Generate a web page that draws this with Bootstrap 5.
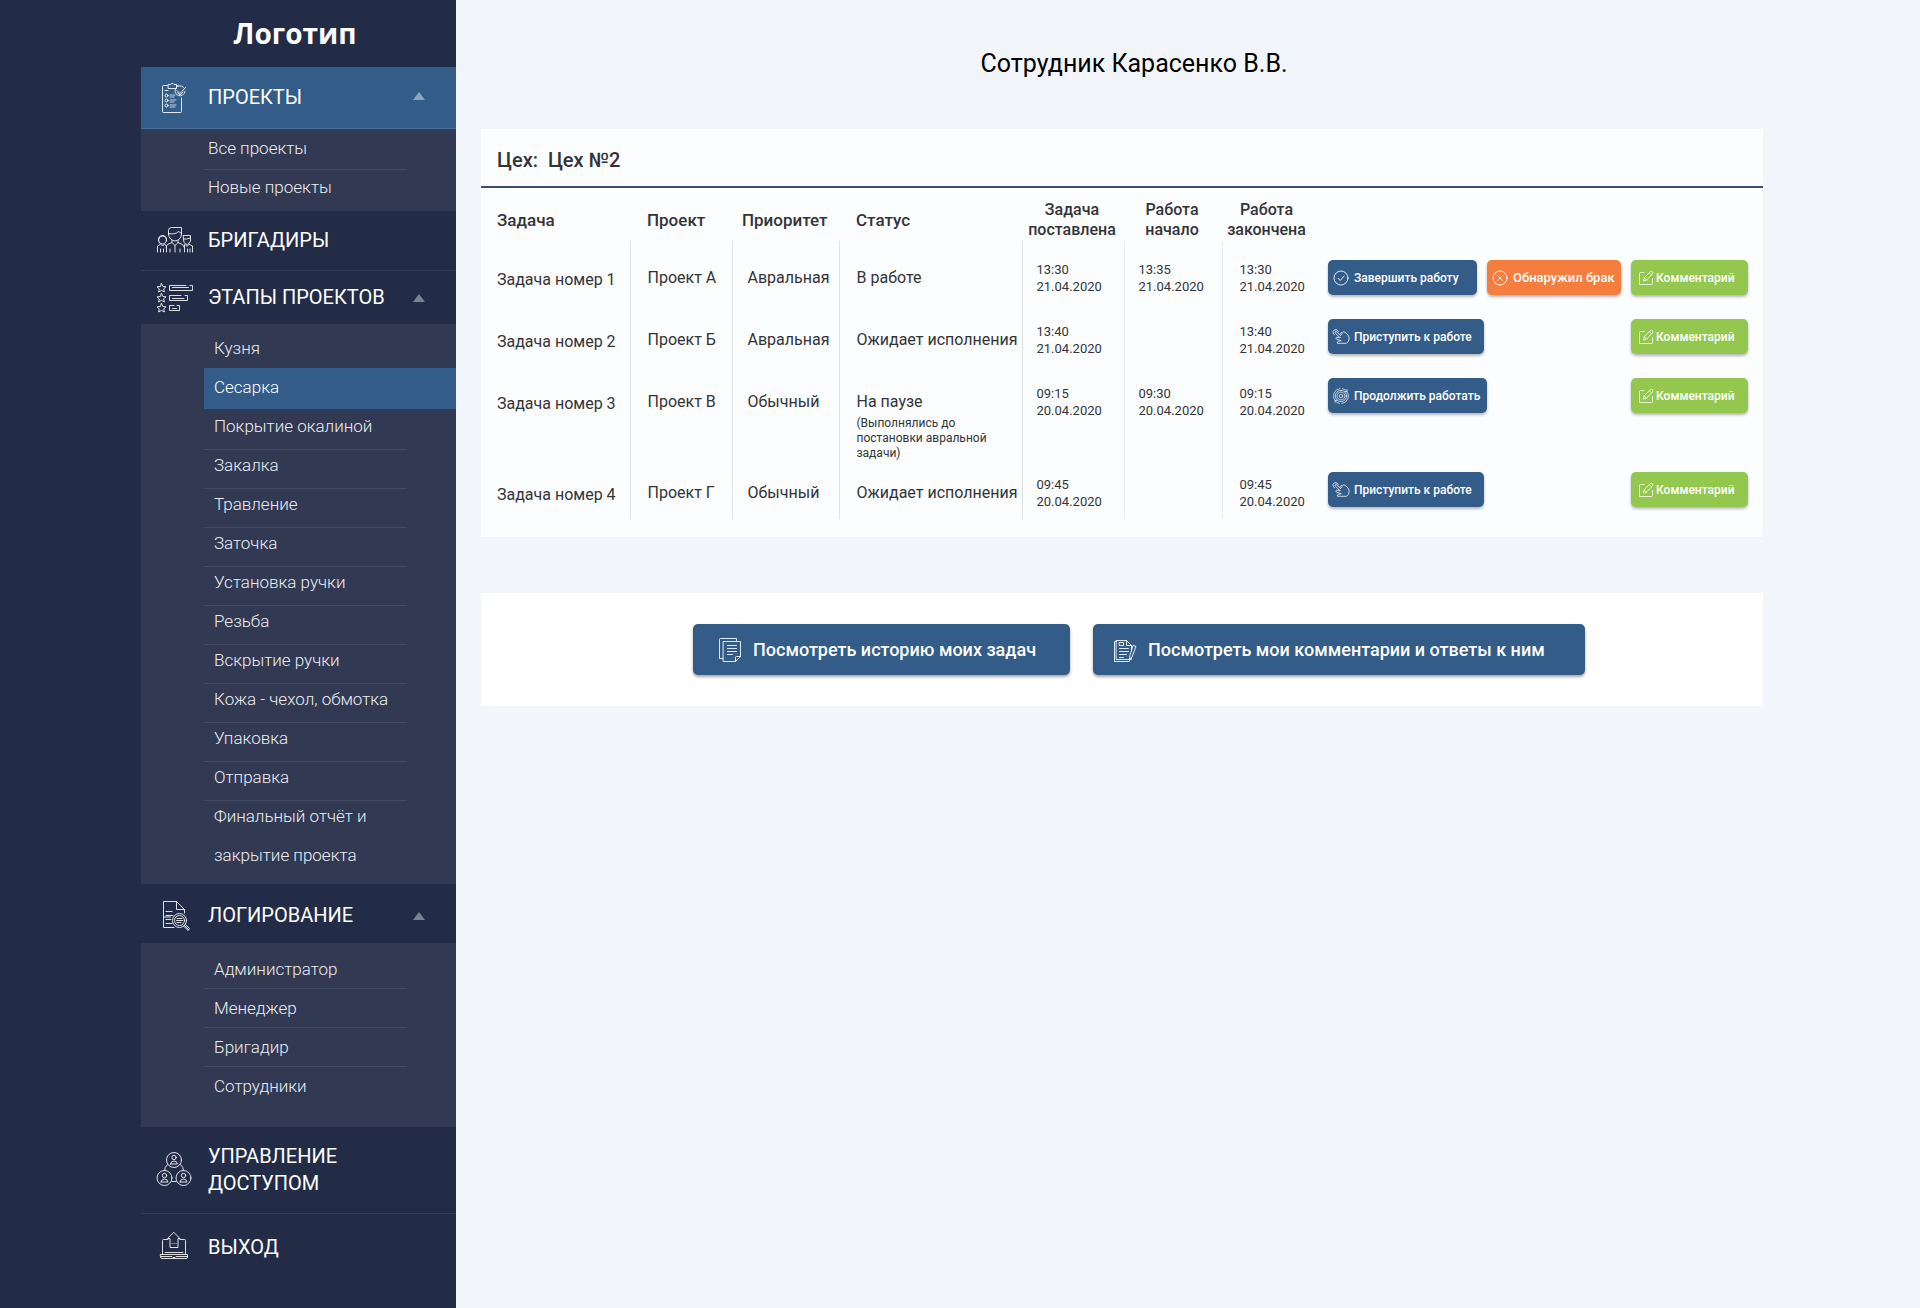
<!DOCTYPE html>
<html lang="ru">
<head>
<meta charset="utf-8">
<meta name="viewport" content="width=device-width, initial-scale=1">
<title>Сотрудник Карасенко В.В.</title>
<link href="https://cdn.jsdelivr.net/npm/bootstrap@5.3.0/dist/css/bootstrap.min.css" rel="stylesheet">
<style>
  body { font-family: Roboto, "Noto Sans", sans-serif; background: #f2f6fb; color: #333437; }
  .side { width: 456px; padding-left: 141px; background: #222c47; }
  .brand { height: 67px; line-height: 67px; font-family: "Open Sans", "Noto Sans", sans-serif; font-size: 28px; font-weight: 700; padding-right: 7px; }
  .sect { height: 60px; padding: 0 31px 0 13px; gap: 14px; border: 0; border-bottom: 1px solid #323d59; background: none; color: #fff; font-size: 20px; line-height: 27px; font-weight: 400; text-align: left; }
  .sect svg.ico { width: 40px; height: 40px; flex: none; }
  .sect.current { height: 62px; background: #335c88; border-color: #44709c; }
  .sect.opened { border-bottom: 0; }
  .stages-head { height: 53px; }
  .log-head { height: 59px; padding-top: 4px; }
  .access { height: 87px; }
  .leave { height: 66px; border-bottom: 0; }
  .tri { width: 0; height: 0; border: 6px solid transparent; border-top: 0; border-bottom: 8px solid #7c8292; }
  .current .tri { border-bottom-color: #8ba4be; margin-bottom: 4px; }
  .sub { background: #323953; padding-left: 63px; }
  .sub li { margin-right: 49px; padding-bottom: 3px; border-bottom: 1px solid #434a64; }
  .sub li:last-child, .sub li.on, .sub li.plain { border-bottom-color: transparent; }
  .sub a { display: block; margin-top: -4px; padding-left: 10px; color: #eceef2; font-size: 17px; line-height: 39px; font-weight: 300; text-decoration: none; white-space: nowrap; }
  .sub li.on { margin-right: 0; padding-bottom: 1px; }
  .sub li.on a { background: #335c88; padding-bottom: 2px; color: #fff; }
  .sub-projects { padding-top: 2px; height: 82px; }
  .sub-projects li { padding-bottom: 1px; }
  .sub-projects a { margin-top: -2px; padding-left: 4px; }
  .sub-stages { padding-top: 9px; height: 560px; }
  .sub-logs { padding-top: 7px; height: 184px; }
  .sub-logs a { margin-top: 0; line-height: 38px; }
  .sub-logs li { padding-bottom: 0; }

  .page { padding: 0 157px 40px 25px; min-width: 0; }
  .page-title { font-size: 25px; line-height: 32px; font-weight: 400; color: #000; padding: 48px 0 49px 24px; margin: 0; }
  .panel { background: #fcfdff; padding-bottom: 18px; }
  .panel-title { font-size: 20px; line-height: 24px; font-weight: 500; padding: 19px 16px 14px; margin: 0; border-bottom: 2px solid #3f4b70; white-space: pre-wrap; }
  .tasks { width: 100%; table-layout: fixed; font-size: 16px; line-height: 24px; }
  .tasks th { height: 53px; padding: 11px 0 0 17px; font-size: 17px; font-weight: 500; line-height: 20px; vertical-align: middle; }
  .tasks th:first-child { padding-left: 16px; }
  .tasks th.when { padding: 10px 2px 0 0; font-size: 16px; text-align: center; }
  .tasks td { height: 62px; padding: 25px 0 0 17px; vertical-align: top; border-right: 1px solid #e0e1e4; white-space: nowrap; }
  .tasks tr.tall td { height: 91px; }
  .tasks tr:last-child td { height: 63px; }
  .tasks td:first-child { padding: 27px 0 0 16px; }
  .tasks td.prio { padding-left: 15px; }
  .tasks th.prio { padding-left: 10px; }
  .tasks td.when { padding: 20px 0 0 14px; font-size: 13px; line-height: 17px; border-color: #eaebee; }
  .tasks td.done, .tasks td.acts { border-right: 0; }
  .tasks td.done { padding-left: 17px; }
  .tasks td.acts { padding: 19px 15px 0; }
  .tasks .lift-1 td.acts { padding-top: 16px; }
  .tasks .lift-2 td.acts { padding-top: 13px; }
  .remark { margin: 2px 0 -8px; font-size: 12px; line-height: 15px; width: 140px; white-space: normal; }
  .act { height: 35px; padding: 0 8px 0 4px; gap: 4px; border: 0; border-radius: 5px; color: #fff; font-size: 12px; line-height: 18px; font-weight: 500; box-shadow: 0 2px 3px rgba(0,0,0,.28); white-space: nowrap; }
  .act svg { width: 18px; height: 18px; flex: none; }
  .act-blue { background: #335c88; }
  .act-red { background: #f57d3d; width: 134px; margin-left: 10px; font-size: 13px; }
  .act-green { background: #93c74e; width: 117px; padding-left: 6px; gap: 1px; }
  .w-finish { width: 149px; }
  .w-start { width: 156px; }
  .w-resume { width: 159px; }
  .links { background: #fff; margin-top: 56px; padding: 31px 4px 31px 38px; gap: 23px; }
  .big { height: 51px; gap: 10px; border: 0; border-radius: 5px; background: #335c88; color: #fff; font-size: 18px; font-weight: 500; box-shadow: 0 2px 3px rgba(0,0,0,.35); }
  .big svg { width: 26px; height: 26px; flex: none; }
  .big-history { width: 377px; padding: 0 0 0 24px; }
  .big-comments { width: 492px; padding: 0 0 0 19px; }
  .ln { fill: none; stroke: currentColor; stroke-linecap: round; stroke-linejoin: round; stroke-opacity: .85; }
</style>
<script src="https://cdn.jsdelivr.net/npm/bootstrap@5.3.0/dist/js/bootstrap.bundle.min.js"></script>
</head>
<body>
<svg class="d-none" aria-hidden="true">
  <symbol id="i-check" viewBox="0 0 18 18"><g class="ln"><circle cx="9" cy="9" r="7"/><path d="M6 9.300l2.200 2.200 4-4.600"/></g></symbol>
  <symbol id="i-cross" viewBox="0 0 18 18"><g class="ln"><circle cx="9" cy="9" r="7"/><path d="M6.500 6.500l5 5M11.500 6.500l-5 5"/></g></symbol>
  <symbol id="i-edit" viewBox="0 0 18 18"><g class="ln" stroke-width=".9"><path d="M7 3.500H3.500Q2.500 3.500 2.500 4.500V15.500H14.500Q15.500 15.500 15.500 14.500V9.500"/><path d="M6.500 11.700L7.300 8.800 13.200 2.600Q14.500 1.700 15.500 2.700 16.400 3.800 15.500 4.900L9.500 11.200zM12.300 3.700l2.100 2.100M7.300 8.800l2.200 2.400"/></g></symbol>
  <symbol id="i-tap" viewBox="0 0 18 18"><g class="ln" stroke-width=".9"><path d="M2.500 6.800A3 3 0 0 1 1 3.500Q1.800 1.500 4 1.700 5.800 1.900 6.300 3.700"/><path d="M8 9.700L3.200 4.900Q2.600 3.800 3.600 3.500 4.200 3.300 4.900 4L8.500 7.300M8.200 5.500Q9 3.800 10.600 4.700 11.500 3 13 4.300 16.800 6.500 17.300 10 17 14 14.500 15.300H5.500Q4.500 13.700 6.500 13.300L9.200 12.700 4.500 11.200Q3 9.900 4.700 9.300L8 9.700M8.500 7.300L10.200 5.800"/></g></symbol>
  <symbol id="i-gear" viewBox="0 0 18 18"><g class="ln" stroke-width=".8"><circle cx="9" cy="9" r="1.700"/><circle cx="9" cy="9" r="3.900" stroke-dasharray="2.300 .7"/><circle cx="9" cy="9" r="5.600"/><path d="M3.300 14A7.600 7.600 0 0 1 8 1.500M10.500 1.600L13.700 3.300M14.800 4.200A7.600 7.600 0 0 1 9.800 16.500M7.500 16.400L4.500 15.200M15 2.500v2h-2M3 15.500v-2h2"/></g></symbol>
  <symbol id="i-papers" viewBox="0 0 26 26"><g class="ln"><path d="M19.500 3.500V1.500H3.500Q2.500 1.500 2.500 2.500V21.500H6"/><path d="M6.500 4.500H23.500V19.500L18.500 24.500H6.500zM23.500 19.500H19.500Q18.500 19.500 18.500 20.500V24.500M10.500 8.500h9M10.500 11.500h9M10.500 14.500h9M10.500 17.500h5" /></g></symbol>
  <symbol id="i-note" viewBox="0 0 26 26"><g class="ln"><path d="M4.500 4.500H2.500V24.500H17.500V23"/><path d="M4.500 3.500H14.500L19.500 8.500V22.500H4.500zM14.500 3.500V8.500H19.500M7.500 5.500h4v3h-4zM7.500 11.500h9M7.500 14.500h9M7.500 17.500h7M7.500 20.500h4"/><path d="M21.500 8.500L24 9.500 20 20 17.500 22 17.800 18.800z" fill="#335c88"/></g></symbol>
</svg>

<div class="d-flex min-vh-100">
  <nav class="side flex-shrink-0 text-white" aria-label="Главное меню">
    <div class="brand text-center">Логотип</div>

    <button type="button" class="sect current d-flex align-items-center w-100">
      <svg class="ico" viewBox="0 0 40 40"><g class="ln"><path d="M13.500 7.500H9.500Q8.500 7.500 8.500 8.500V33.500Q8.500 34.500 9.500 34.500H26.500Q27.500 34.500 27.500 33.500V20M22.500 7.500H24"/><path d="M14.500 6.500H16.500Q17 5.500 18 5.500 19.500 5.500 20 6.500H22.500V10.500H14.500zM11 12.500h3"/><circle cx="12.500" cy="17.500" r="1.500"/><circle cx="12.500" cy="22.500" r="1.500"/><circle cx="12.500" cy="27.500" r="1.500"/><path d="M16 17h5M16 19h4M16 22h6M16 24h4M16 27h6M16 29h5" stroke-opacity=".7"/><path d="M29.500 9.200A5 5 0 1 0 31 13.500M23 12.500l3 3L31.500 9.500M23.500 14.500l2.500 2.500 3-3"/></g></svg>
      <span class="flex-grow-1">ПРОЕКТЫ</span><span class="tri"></span>
    </button>
    <ul class="sub sub-projects list-unstyled mb-0">
      <li><a href="#">Все проекты</a></li>
      <li><a href="#">Новые проекты</a></li>
    </ul>

    <a href="#" class="sect d-flex align-items-center text-decoration-none">
      <svg class="ico" viewBox="0 0 40 40"><g class="ln"><path d="M14.500 13V9.500Q14.500 6.500 17.500 6.500H27.500V13Q27 19 21 20 15 19 14.500 13zM14.500 12.500Q21 14 24.500 10.500L27.500 12.500M18 19.500V21.500L21 24.500 24 21.500V19.500M18 21.500L13.500 23.500 12 26M24 21.500L28.500 23.500 30 26M21 24.500V31M16 28v3M26 28v3"/><circle cx="8.500" cy="19" r="4"/><path d="M4.500 20Q4 14.500 9 14.500 13 15 12.500 20M6.500 23L8.500 25 10.500 23M6 23.500L3.500 25V31M11 23.500L12.500 25.500V31M6.500 28v3M9.500 28v3M29.500 14.500H36.500V20Q35 23.500 33 23.500 29.500 23 29.500 18zM29.500 18h3l4-1M31 23.500L33 25.500 35 23.500M35.500 23.500L38.500 25V31M30.500 24V31M33.500 28v3M36 28v3"/></g></svg>
      <span>БРИГАДИРЫ</span>
    </a>

    <button type="button" class="sect opened stages-head d-flex align-items-center w-100">
      <svg class="ico" viewBox="0 0 40 40"><g class="ln"><path id="star" d="M7.500 5.500L8.900 8.500 12 8.800 9.700 10.900 10.400 14 7.500 12.400 4.600 14 5.300 10.900 3 8.800 6.100 8.500z"/><use href="#star" y="10"/><use href="#star" y="20"/><path d="M32 7.500H15.500V12.500H38.500V7.500H36M18.500 9.500H34.500"/><path d="M27 17.500H15.500V22.500H33.500V17.500H31M18.500 20.500H30"/><path d="M20 27.500H15.500V32.500H25.500V27.500H23M18.500 30.500h4"/></g></svg>
      <span class="flex-grow-1">ЭТАПЫ ПРОЕКТОВ</span><span class="tri"></span>
    </button>
    <ul class="sub sub-stages list-unstyled mb-0">
      <li class="plain"><a href="#">Кузня</a></li>
      <li class="on"><a href="#" aria-current="page">Сесарка</a></li>
      <li><a href="#">Покрытие окалиной</a></li>
      <li><a href="#">Закалка</a></li>
      <li><a href="#">Травление</a></li>
      <li><a href="#">Заточка</a></li>
      <li><a href="#">Установка ручки</a></li>
      <li><a href="#">Резьба</a></li>
      <li><a href="#">Вскрытие ручки</a></li>
      <li><a href="#">Кожа - чехол, обмотка</a></li>
      <li><a href="#">Упаковка</a></li>
      <li><a href="#">Отправка</a></li>
      <li><a href="#">Финальный отчёт и<br>закрытие проекта</a></li>
    </ul>

    <button type="button" class="sect opened log-head d-flex align-items-center w-100">
      <svg class="ico" viewBox="0 0 40 40"><g class="ln"><path d="M20 31.500H9.500V5.500H22.500L30.500 13.500V17M22.500 5.500V13.500H30.500M12 15.500h6M12 19.500h7M12 23.500h5M12 27.500h6M9.500 21h7"/><circle cx="25.500" cy="24.500" r="7"/><circle cx="25.500" cy="24.500" r="5"/><path d="M23 22.500h5M22.500 24.500h6M23 26.500h4M30.500 29.500L34.500 33.500M31.500 28.500L35.500 32.500 34 34.500 29.500 30"/></g></svg>
      <span class="flex-grow-1">ЛОГИРОВАНИЕ</span><span class="tri"></span>
    </button>
    <ul class="sub sub-logs list-unstyled mb-0">
      <li><a href="#">Администратор</a></li>
      <li><a href="#">Менеджер</a></li>
      <li><a href="#">Бригадир</a></li>
      <li><a href="#">Сотрудники</a></li>
    </ul>

    <a href="#" class="sect access d-flex align-items-center text-decoration-none">
      <svg class="ico" viewBox="0 0 40 40"><g class="ln"><g id="member"><circle cx="20" cy="10" r="7.500"/><circle cx="20" cy="7.500" r="2.200"/><path d="M16.500 14Q17 11 20 11T23.500 14H16.500"/></g><use href="#member" x="-9.500" y="18"/><use href="#member" x="9.500" y="18"/><path d="M13.500 14.500Q10.500 17 10.500 20.500M26.500 14.500Q29.500 17 29.500 20.500M18 31.500h4"/></g></svg>
      <span>УПРАВЛЕНИЕ<br>ДОСТУПОМ</span>
    </a>
    <a href="#" class="sect leave d-flex align-items-center text-decoration-none">
      <svg class="ico" viewBox="0 0 40 40"><g class="ln"><path d="M14 12.500H9.500Q8.500 12.500 8.500 13.500V27.500M26 12.500H30.500Q31.500 12.500 31.500 13.500V27.500M11 25.500h18"/><path d="M20 5.500L26 11.500H24V20.500H16V11.500H14zM18 16.500h.1M20 16.500h.1M22 16.500h.1"/><path d="M6.500 27.500H33.500V30Q33.500 31.500 32 31.500H8Q6.500 31.500 6.500 30zM7 29.500H18L19 30.500H21L22 29.500H33"/></g></svg>
      <span>ВЫХОД</span>
    </a>
  </nav>

  <main class="page flex-grow-1">
    <h1 class="page-title text-center">Сотрудник Карасенко В.В.</h1>

    <section class="panel">
      <h2 class="panel-title">Цех:  Цех №2</h2>
      <table class="tasks">
        <colgroup>
          <col style="width:149px"><col style="width:102px"><col style="width:107px"><col style="width:183px"><col style="width:102px"><col style="width:98px"><col style="width:91px"><col>
        </colgroup>
        <thead>
          <tr>
            <th scope="col">Задача</th><th scope="col">Проект</th><th scope="col" class="prio">Приоритет</th><th scope="col">Статус</th>
            <th scope="col" class="when">Задача<br>поставлена</th><th scope="col" class="when">Работа<br>начало</th><th scope="col" class="when">Работа<br>закончена</th><th></th>
          </tr>
        </thead>
        <tbody>
          <tr>
            <td>Задача номер 1</td><td>Проект А</td><td class="prio">Авральная</td><td>В работе</td>
            <td class="when">13:30<br>21.04.2020</td><td class="when">13:35<br>21.04.2020</td><td class="when done">13:30<br>21.04.2020</td>
            <td class="acts"><div class="d-flex">
              <button type="button" class="act act-blue w-finish d-flex align-items-center"><svg><use href="#i-check"/></svg>Завершить работу</button>
              <button type="button" class="act act-red d-flex align-items-center"><svg><use href="#i-cross"/></svg>Обнаружил брак</button>
              <button type="button" class="act act-green ms-auto d-flex align-items-center"><svg><use href="#i-edit"/></svg>Комментарий</button>
            </div></td>
          </tr>
          <tr class="lift-1">
            <td>Задача номер 2</td><td>Проект Б</td><td class="prio">Авральная</td><td>Ожидает исполнения</td>
            <td class="when">13:40<br>21.04.2020</td><td class="when"></td><td class="when done">13:40<br>21.04.2020</td>
            <td class="acts"><div class="d-flex">
              <button type="button" class="act act-blue w-start d-flex align-items-center"><svg><use href="#i-tap"/></svg>Приступить к работе</button>
              <button type="button" class="act act-green ms-auto d-flex align-items-center"><svg><use href="#i-edit"/></svg>Комментарий</button>
            </div></td>
          </tr>
          <tr class="tall lift-2">
            <td>Задача номер 3</td><td>Проект В</td><td class="prio">Обычный</td><td>На паузе<div class="remark">(Выполнялись до постановки авральной задачи)</div></td>
            <td class="when">09:15<br>20.04.2020</td><td class="when">09:30<br>20.04.2020</td><td class="when done">09:15<br>20.04.2020</td>
            <td class="acts"><div class="d-flex">
              <button type="button" class="act act-blue w-resume d-flex align-items-center"><svg><use href="#i-gear"/></svg>Продолжить работать</button>
              <button type="button" class="act act-green ms-auto d-flex align-items-center"><svg><use href="#i-edit"/></svg>Комментарий</button>
            </div></td>
          </tr>
          <tr class="lift-1">
            <td>Задача номер 4</td><td>Проект Г</td><td class="prio">Обычный</td><td>Ожидает исполнения</td>
            <td class="when">09:45<br>20.04.2020</td><td class="when"></td><td class="when done">09:45<br>20.04.2020</td>
            <td class="acts"><div class="d-flex">
              <button type="button" class="act act-blue w-start d-flex align-items-center"><svg><use href="#i-tap"/></svg>Приступить к работе</button>
              <button type="button" class="act act-green ms-auto d-flex align-items-center"><svg><use href="#i-edit"/></svg>Комментарий</button>
            </div></td>
          </tr>
        </tbody>
      </table>
    </section>

    <section class="links d-flex justify-content-center">
      <button type="button" class="big big-history d-flex align-items-center"><svg><use href="#i-papers"/></svg>Посмотреть историю моих задач</button>
      <button type="button" class="big big-comments d-flex align-items-center"><svg><use href="#i-note"/></svg>Посмотреть мои комментарии и ответы к ним</button>
    </section>
  </main>
</div>
</body>
</html>
